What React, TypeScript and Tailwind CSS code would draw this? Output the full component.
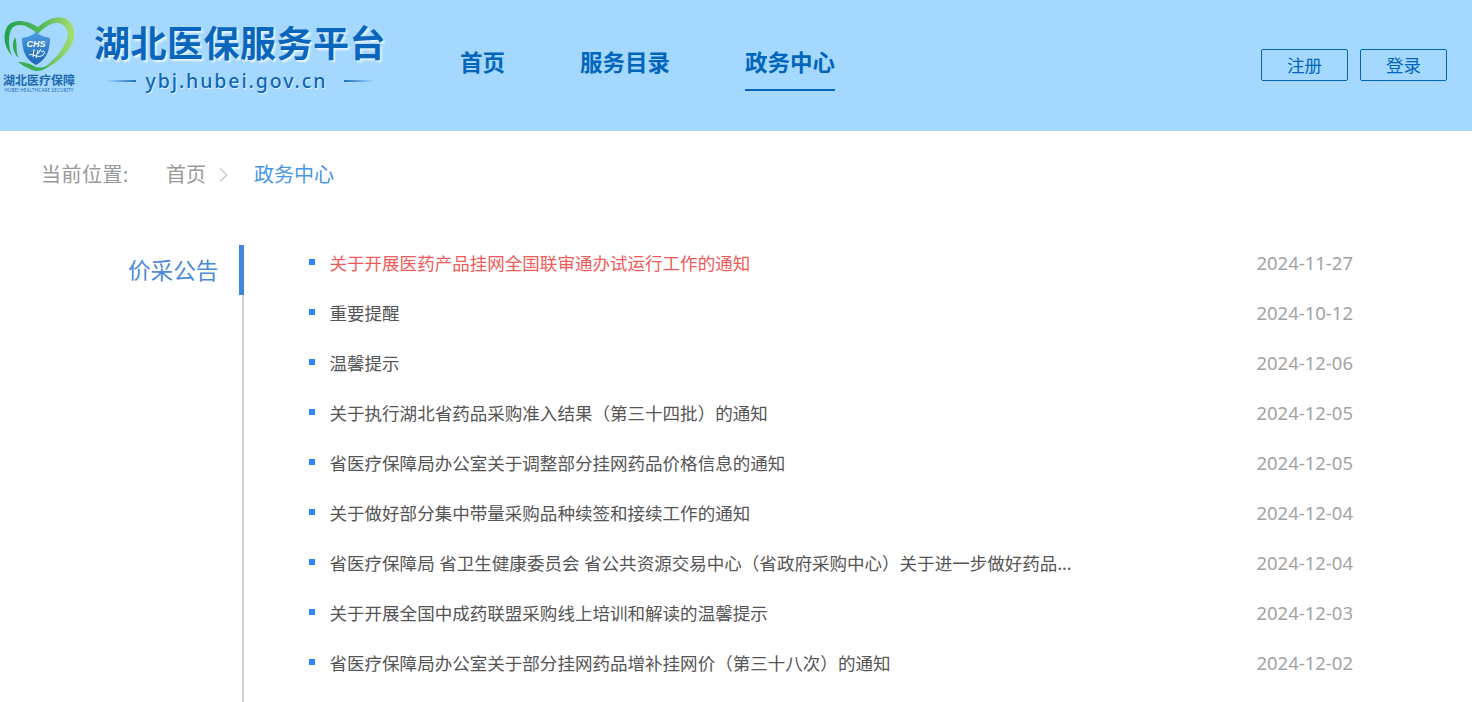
import React from "react";

const rows: [string, string, boolean?][] = [
  ["关于开展医药产品挂网全国联审通办试运行工作的通知", "2024-11-27", true],
  ["重要提醒", "2024-10-12"],
  ["温馨提示", "2024-12-06"],
  ["关于执行湖北省药品采购准入结果（第三十四批）的通知", "2024-12-05"],
  ["省医疗保障局办公室关于调整部分挂网药品价格信息的通知", "2024-12-05"],
  ["关于做好部分集中带量采购品种续签和接续工作的通知", "2024-12-04"],
  ["省医疗保障局 省卫生健康委员会 省公共资源交易中心（省政府采购中心）关于进一步做好药品...", "2024-12-04"],
  ["关于开展全国中成药联盟采购线上培训和解读的温馨提示", "2024-12-03"],
  ["省医疗保障局办公室关于部分挂网药品增补挂网价（第三十八次）的通知", "2024-12-02"],
];

function Logo() {
  return (
    <div className="flex w-[78px] shrink-0 flex-col items-center pt-[12px]">
      <svg width="78" height="62" viewBox="0 0 78 62" className="block">
        <defs>
          <linearGradient id="h" x1="0" y1="0" x2="1" y2="0">
            <stop offset="0" stopColor="#1fa24a" />
            <stop offset="0.55" stopColor="#57bb5a" />
            <stop offset="1" stopColor="#a9de72" />
          </linearGradient>
          <linearGradient id="s" x1="0" y1="0" x2="0" y2="1">
            <stop offset="0" stopColor="#4a9de2" />
            <stop offset="1" stopColor="#1c66b4" />
          </linearGradient>
        </defs>
        <path d="M12 44 C5 36 2 25 7 15 C12 7 26 7 38 15 C48 6 60 2 68 8 C77 15 76 29 67 40 C59 49 50 55 42 58 C49 51 57 45 62 37 C69 27 70 18 63 13 C56 8 46 13 38 22 C28 13 18 10 12 16 C8 23 8 34 12 44 Z" fill="url(#h)" />
        <path d="M22 26 C29 25 33 23 36 20 C39 23 44 25 50 26 C50 41 45 48 36 53 C27 48 22 41 22 26 Z" fill="url(#s)" />
        <path d="M15 25 C18 32 15 40 19 46 C13 42 11 32 15 25 Z" fill="#34a94c" />
        <path d="M18 50 C26 50 30 52 36 55 C39 56 44 56 48 53 C44 59 38 60 32 58 C27 56 22 53 18 50 Z" fill="#3bb050" />
        <text x="36" y="35" textAnchor="middle" fill="#ffffff" fontSize="9" fontWeight="700" fontStyle="italic" fontFamily="'Liberation Sans', sans-serif">CHS</text>
        <path d="M29 43 C33 41 38 47 43 43 C46 40 44 38 41 40" stroke="#ffffff" strokeWidth="1" fill="none" />
        <path d="M34 37 L33 45 M38 38 L36 46 M41 37 L38 42" stroke="#ffffff" strokeWidth="1" fill="none" />
      </svg>
      <span className="mt-[1px] whitespace-nowrap text-[12px] font-bold leading-[12px] text-[#1c68ad]">湖北医疗保障</span>
      <span className="mt-[1px] whitespace-nowrap text-[4.5px] leading-[5px] tracking-[0.2px] text-[#1c68ad]">HUBEI HEALTHCARE SECURITY</span>
    </div>
  );
}

export default function App() {
  return (
    <div className="h-[702px] overflow-hidden bg-white font-['Noto_Sans','Noto_Sans_CJK_SC',sans-serif]">
      <header className="flex h-[131px] bg-[#a5d8ff]">
        <Logo />
        <div className="ml-[14px] flex w-[296px] flex-col items-center pt-[17px]">
          <span className="whitespace-nowrap font-['Noto_Sans_CJK_SC',sans-serif] text-[36px] font-bold leading-[48px] tracking-[0.5px] text-[#0a66bd] [text-shadow:2px_2px_2px_#e8f6ff]">湖北医保服务平台</span>
          <div className="mt-[2px] flex items-center gap-[10px]">
            <span className="h-[2px] w-[30px] bg-linear-to-r from-transparent to-[#1f70bd]" />
            <span className="whitespace-nowrap text-[19.5px] font-medium leading-[28px] tracking-[1.9px] text-[#0f66b8] [text-shadow:1px_1px_1px_#e8f6ff]">ybj.hubei.gov.cn</span>
            <span className="ml-[7px] h-[2px] w-[30px] bg-linear-to-r from-[#1f70bd] to-transparent" />
          </div>
        </div>
        <nav className="ml-[72px] flex gap-[75px] pt-[40px] font-['Noto_Sans_CJK_SC',sans-serif]">
          <a className="h-[51px] text-[22.5px] font-bold leading-[42px] text-[#0066bb]">首页</a>
          <a className="h-[51px] text-[22.5px] font-bold leading-[42px] text-[#0066bb]">服务目录</a>
          <a className="h-[51px] border-b-2 border-[#0066bb] text-[22.5px] font-bold leading-[42px] text-[#0066bb]">政务中心</a>
        </nav>
        <div className="ml-auto mr-[25px] flex gap-[12px] pt-[49px]">
          <button className="h-[32px] w-[87px] rounded-[2px] border border-[#0066bb] text-[17.5px] leading-[30px] text-[#0066bb]">注册</button>
          <button className="h-[32px] w-[87px] rounded-[2px] border border-[#0066bb] text-[17.5px] leading-[30px] text-[#0066bb]">登录</button>
        </div>
      </header>
      <div className="flex h-[86px] items-center pl-[41px] pt-[2px] text-[20px] leading-[28px]">
        <span className="w-[125px] tracking-[0.5px] text-[#999999]">当前位置:</span>
        <span className="text-[#999999]">首页</span>
        <svg width="12" height="16" viewBox="0 0 12 16" className="ml-[12px] mr-[24px]">
          <path d="M2 1.500 L9 8 L2 14.500" stroke="#c4cad2" strokeWidth="1.300" fill="none" />
        </svg>
        <span className="text-[#4897e6]">政务中心</span>
      </div>
      <main className="mt-[28px] flex">
        <aside className="flex h-[500px] w-[244px] shrink-0 justify-end border-r-2 border-[#d2d2d2]">
          <div className="-mr-[2px] h-[50px] w-[116px] border-r-[5px] border-[#3e86de] text-[22.6px] leading-[52px] text-[#4a8ad8]">价采公告</div>
        </aside>
        <ul className="-mt-[6px] w-[1109px] pl-[65px]">
          {rows.map(([title, date, hot]) => (
            <li key={date + title} className="flex h-[50px] items-center justify-between pb-[2px]">
              <div className="flex items-center">
                <span className="mr-[14.5px] h-[6px] w-[6px] -translate-y-[1px] bg-[#2f88ff]" />
                <span className={`whitespace-nowrap text-[17.55px] leading-[38px] ${hot ? "text-[#f25a5a]" : "text-[#555555]"}`}>{title}</span>
              </div>
              <span className="text-[18.5px] text-[#a3a3a3]">{date}</span>
            </li>
          ))}
        </ul>
      </main>
    </div>
  );
}
